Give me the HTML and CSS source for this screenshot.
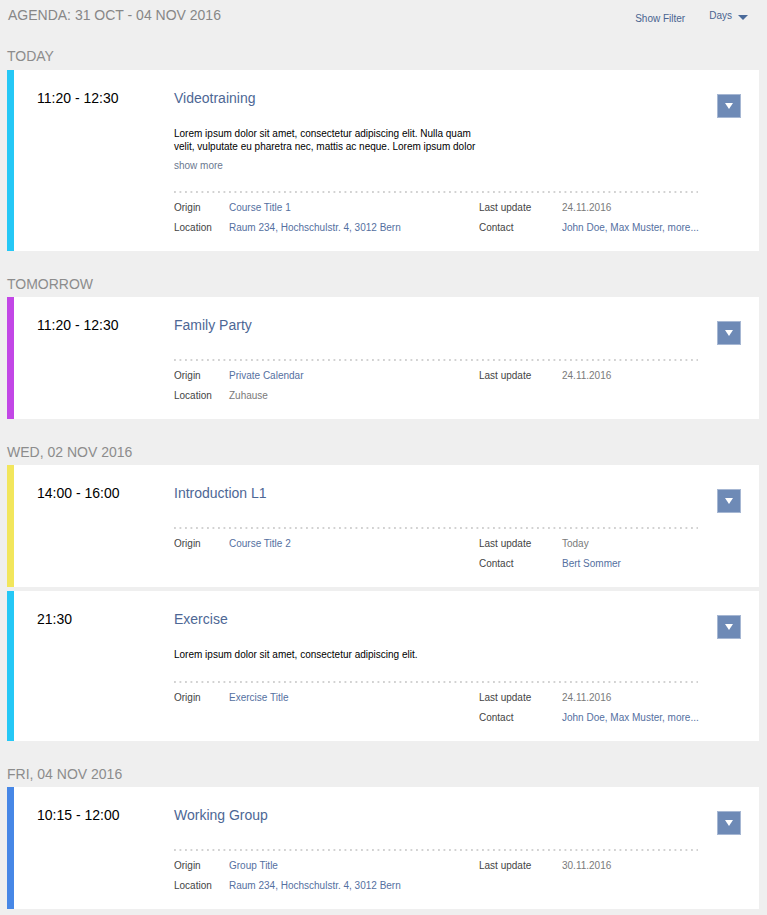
FILE: index.html
```html
<!DOCTYPE html>
<html lang="en">
<head>
<meta charset="utf-8">
<title>Agenda</title>
<link rel="stylesheet" href="styles.css">
</head>
<body>
<div class="page">
  <header class="topbar">
    <h1 class="agenda-title">AGENDA: 31 OCT - 04 NOV 2016</h1>
    <div class="tools">
      <span class="show-filter">Show Filter</span>
      <span class="days">Days <span class="caret"></span></span>
    </div>
  </header>

  <h2 class="day first">TODAY</h2>
  <div class="card bar-cyan">
    <div class="time">11:20 - 12:30</div>
    <div class="main">
      <div class="title">Videotraining</div>
      <p class="desc">Lorem ipsum dolor sit amet, consectetur adipiscing elit. Nulla quam velit, vulputate eu pharetra nec, mattis ac neque. Lorem ipsum dolor</p>
      <div class="show-more">show more</div>
      <div class="sep"></div>
      <div class="meta">
        <span class="lbl">Origin</span><span class="val">Course Title 1</span><span class="lbl">Last update</span><span class="val grey">24.11.2016</span>
        <span class="lbl">Location</span><span class="val">Raum 234, Hochschulstr. 4, 3012 Bern</span><span class="lbl">Contact</span><span class="val">John Doe, Max Muster, more...</span>
      </div>
    </div>
    <div class="btn-col"><span class="btn"><span class="tri"></span></span></div>
  </div>

  <h2 class="day">TOMORROW</h2>
  <div class="card bar-purple">
    <div class="time">11:20 - 12:30</div>
    <div class="main">
      <div class="title">Family Party</div>
      <div class="sep"></div>
      <div class="meta">
        <span class="lbl">Origin</span><span class="val">Private Calendar</span><span class="lbl">Last update</span><span class="val grey">24.11.2016</span>
        <span class="lbl">Location</span><span class="val grey">Zuhause</span><span></span><span></span>
      </div>
    </div>
    <div class="btn-col"><span class="btn"><span class="tri"></span></span></div>
  </div>

  <h2 class="day">WED, 02 NOV 2016</h2>
  <div class="card bar-yellow">
    <div class="time">14:00 - 16:00</div>
    <div class="main">
      <div class="title">Introduction L1</div>
      <div class="sep"></div>
      <div class="meta">
        <span class="lbl">Origin</span><span class="val">Course Title 2</span><span class="lbl">Last update</span><span class="val grey">Today</span>
        <span></span><span></span><span class="lbl">Contact</span><span class="val">Bert Sommer</span>
      </div>
    </div>
    <div class="btn-col"><span class="btn"><span class="tri"></span></span></div>
  </div>
  <div class="card bar-cyan next">
    <div class="time">21:30</div>
    <div class="main">
      <div class="title">Exercise</div>
      <p class="desc">Lorem ipsum dolor sit amet, consectetur adipiscing elit.</p>
      <div class="sep"></div>
      <div class="meta">
        <span class="lbl">Origin</span><span class="val">Exercise Title</span><span class="lbl">Last update</span><span class="val grey">24.11.2016</span>
        <span></span><span></span><span class="lbl">Contact</span><span class="val">John Doe, Max Muster, more...</span>
      </div>
    </div>
    <div class="btn-col"><span class="btn"><span class="tri"></span></span></div>
  </div>

  <h2 class="day">FRI, 04 NOV 2016</h2>
  <div class="card bar-blue">
    <div class="time">10:15 - 12:00</div>
    <div class="main">
      <div class="title">Working Group</div>
      <div class="sep"></div>
      <div class="meta">
        <span class="lbl">Origin</span><span class="val">Group Title</span><span class="lbl">Last update</span><span class="val grey">30.11.2016</span>
        <span class="lbl">Location</span><span class="val">Raum 234, Hochschulstr. 4, 3012 Bern</span><span></span><span></span>
      </div>
    </div>
    <div class="btn-col"><span class="btn"><span class="tri"></span></span></div>
  </div>
</div>
</body>
</html>
```

FILE: styles.css
```css
html, body {
  margin: 0;
  padding: 0;
  background: #efefef;
}
body {
  font-family: "Liberation Sans", Arial, sans-serif;
  color: #000;
}
.page {
  padding: 7px 8px 0 7px;
}
.topbar {
  display: flex;
  justify-content: space-between;
  align-items: flex-start;
  height: 17px;
}
.agenda-title {
  margin: 0;
  padding-left: 1px;
  font-size: 14px;
  line-height: 16px;
  font-weight: normal;
  color: #878787;
}
.tools {
  display: flex;
  align-items: flex-start;
  font-size: 10px;
  color: #4a6490;
  padding-right: 11px;
}
.show-filter {
  margin-top: 6px;
  line-height: 12px;
  margin-right: 24px;
}
.days {
  display: flex;
  align-items: center;
  line-height: 12px;
  margin-top: 3px;
}
.caret {
  display: inline-block;
  width: 0;
  height: 0;
  margin-left: 6px;
  margin-top: 2px;
  border-left: 5px solid transparent;
  border-right: 5px solid transparent;
  border-top: 5px solid #4a6a9a;
}
.day {
  margin: 25px 0 5px 0;
  font-size: 14px;
  line-height: 16px;
  font-weight: normal;
  color: #8c8c8c;
}
.day.first {
  margin-top: 24px;
  margin-bottom: 6px;
}
.card {
  display: grid;
  grid-template-columns: 137px 1fr 24px;
  column-gap: 0;
  background: #fff;
  border-left: 7px solid #28c6f4;
  padding: 20px 18px 13px 23px;
}
.card.next {
  margin-top: 4px;
}
.bar-cyan { border-left-color: #25c8f6; }
.bar-purple { border-left-color: #c247e6; }
.bar-yellow { border-left-color: #f2e65c; }
.bar-blue { border-left-color: #4787e6; }
.time {
  font-size: 14px;
  line-height: 16px;
  color: #000;
}
.main {
  width: 524px;
}
.title {
  font-size: 14px;
  line-height: 16px;
  color: #4d6795;
}
.desc {
  margin: 21px 0 0 0;
  width: 305px;
  font-size: 10px;
  line-height: 13px;
  color: #000;
}
.show-more {
  margin-top: 7px;
  font-size: 10px;
  line-height: 12px;
  color: #6b7890;
}
.sep {
  margin-top: 20px;
  height: 2px;
  background-image: linear-gradient(to right, #d2d2d2 2px, transparent 2px);
  background-size: 5.5px 2px;
  background-repeat: repeat-x;
}
.show-more + .sep {
  margin-top: 19px;
}
.title + .sep {
  margin-top: 26px;
}
.meta {
  display: grid;
  grid-template-columns: 55px 250px 83px 1fr;
  grid-auto-rows: 20px;
  padding-top: 5px;
  font-size: 10px;
  line-height: 20px;
  white-space: nowrap;
}
.lbl {
  color: #444;
}
.val {
  color: #55709f;
}
.val.grey {
  color: #7a7a7a;
}
.btn-col {
  display: flex;
  justify-content: flex-end;
}
.btn {
  box-sizing: border-box;
  display: flex;
  align-items: center;
  justify-content: center;
  width: 24px;
  height: 24px;
  margin-top: 4px;
  background: #6e8ab6;
  border: 1px solid #a6b7d3;
}
.tri {
  width: 0;
  height: 0;
  border-left: 4px solid transparent;
  border-right: 4px solid transparent;
  border-top: 6px solid #fff;
}
```
